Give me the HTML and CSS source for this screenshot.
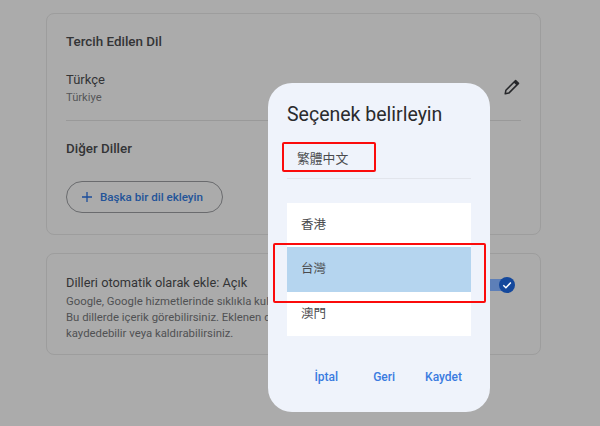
FILE: index.html
```html
<!DOCTYPE html>
<html>
    <head>
        <title>Dil Ayarları</title>
        <link rel="stylesheet" href="styles.css">
    </head>
    <body>
        <div class="card lang-card">
            <p class="card-title">Tercih Edilen Dil</p>
            <div class="lang-row">
                <div>
                    <p class="lang-name">Türkçe</p>
                    <p class="lang-region">Türkiye</p>
                </div>
                <svg class="edit-icon" width="18" height="18" viewBox="0 0 18 18">
                    <path d="M2.2 15.8 L2.9 12.2 L12.6 2.5 L15.5 5.4 L5.8 15.1 Z" fill="none" stroke="#26272a" stroke-width="1.5" stroke-linejoin="round"/>
                    <path d="M11.2 3.9 L14.1 6.8" stroke="#26272a" stroke-width="1.5"/>
                    <path d="M12.6 2.5 L15.5 5.4 L14.1 6.8 L11.2 3.9 Z" fill="#26272a"/>
                </svg>
            </div>
            <p class="card-title other-title">Diğer Diller</p>
            <button class="add-button">
                <svg width="10" height="10" viewBox="0 0 10 10">
                    <path d="M5 0 V10 M0 5 H10" stroke="#1c4e9c" stroke-width="1.3"/>
                </svg>
                Başka bir dil ekleyin
            </button>
        </div>

        <div class="card auto-card">
            <div class="auto-text">
                <p class="auto-title">Dilleri otomatik olarak ekle: Açık</p>
                <p class="auto-desc">Google, Google hizmetlerinde sıklıkla kul<br>Bu dillerde içerik görebilirsiniz. Eklenen d<br>kaydedebilir veya kaldırabilirsiniz.</p>
            </div>
            <div class="toggle">
                <div class="toggle-track"></div>
                <svg class="toggle-knob" width="16" height="16" viewBox="0 0 16 16">
                    <circle cx="8" cy="8" r="8" fill="#14489c"/>
                    <path d="M4.3 8.3 L6.9 10.8 L11.8 5.6" fill="none" stroke="#ffffff" stroke-width="1.5"/>
                </svg>
            </div>
        </div>

        <div class="dialog">
            <p class="dialog-title">Seçenek belirleyin</p>
            <p class="dialog-selected">繁體中文</p>
            <div class="dialog-line"></div>
            <div class="option-list">
                <div class="option">香港</div>
                <div class="option option-selected">台灣</div>
                <div class="option">澳門</div>
            </div>
            <div class="dialog-actions">
                <span class="action-cancel">İptal</span>
                <span>Geri</span>
                <span>Kaydet</span>
            </div>
        </div>

        <div class="red-box red-box-top"></div>
        <div class="red-box red-box-mid"></div>
    </body>
</html>
```

FILE: styles.css
```css
body{
    margin: 0;
    width: 600px;
    height: 426px;
    overflow: hidden;
    padding: 13px 0 0 46px;
    box-sizing: border-box;
    background-color: #ababab;
    font-family: Roboto, "Noto Sans CJK TC", sans-serif;
    color: #2a2b2d;
}
p{
    margin: 0;
}
.card{
    width: 495px;
    box-sizing: border-box;
    border: 1px solid #9d9d9d;
    border-radius: 8px;
    padding: 0 19px;
}
.lang-card{
    height: 222px;
    padding-top: 19px;
}
.card-title{
    font-size: 13.4px;
    line-height: 18px;
    font-weight: 500;
    color: #333436;
}
.lang-row{
    display: flex;
    justify-content: space-between;
    align-items: center;
    margin-top: 20px;
    padding-bottom: 13px;
    border-bottom: 1px solid #999999;
}
.lang-name{
    font-size: 13px;
    line-height: 18px;
    color: #333436;
}
.lang-region{
    font-size: 11.2px;
    line-height: 18px;
    color: #555658;
}
.edit-icon{
    margin-bottom: 4px;
}
.other-title{
    margin-top: 19px;
}
.add-button{
    display: flex;
    align-items: center;
    gap: 8px;
    margin-top: 23px;
    width: 157px;
    height: 32px;
    padding: 0 0 0 15px;
    background-color: transparent;
    border: 1px solid #6a6b6e;
    border-radius: 16px;
    font-family: Roboto, sans-serif;
    font-size: 11.6px;
    font-weight: 500;
    color: #235499;
}
.auto-card{
    height: 102px;
    margin-top: 18px;
    padding-top: 20px;
    display: flex;
    justify-content: space-between;
}
.auto-text{
    white-space: nowrap;
}
.auto-title{
    font-size: 12.8px;
    line-height: 18px;
    color: #333436;
}
.auto-desc{
    margin-top: 1px;
    font-size: 11.35px;
    line-height: 16px;
    color: #505153;
}
.toggle{
    display: flex;
    align-items: center;
    height: 16px;
    margin-top: 3px;
    margin-right: 6px;
}
.toggle-track{
    width: 20px;
    height: 12px;
    margin-right: -4px;
    background-color: #5d7fb8;
}
.toggle-knob{
    position: relative;
}
.dialog{
    position: absolute;
    left: 268px;
    top: 83px;
    width: 222px;
    height: 329px;
    box-sizing: border-box;
    padding: 0 19px;
    background-color: #eff3fb;
    border-radius: 24px;
}
.dialog-title{
    margin-top: 19px;
    font-size: 19.5px;
    line-height: 26px;
    color: #2a2b2d;
}
.dialog-selected{
    margin-top: 22px;
    padding-left: 10px;
    font-size: 12.8px;
    line-height: 18px;
    color: #4a4b4e;
}
.dialog-line{
    margin-top: 10px;
    height: 1px;
    background-color: #e2e5ec;
}
.option-list{
    margin-top: 24px;
    background-color: #ffffff;
}
.option{
    height: 44.4px;
    padding-left: 14px;
    font-size: 12.5px;
    line-height: 44px;
    color: #4a4b4e;
}
.option-selected{
    background-color: #b5d5ef;
}
.dialog-actions{
    display: flex;
    justify-content: flex-end;
    gap: 30px;
    margin-top: 33px;
    margin-right: 9px;
    font-size: 12px;
    font-weight: 500;
    line-height: 16px;
    color: #3a7be0;
}
.action-cancel{
    margin-right: 5px;
}
.red-box{
    position: absolute;
    box-sizing: border-box;
    border: 2.5px solid #fb0b0b;
    border-radius: 2px;
}
.red-box-top{
    left: 282px;
    top: 142px;
    width: 94px;
    height: 30px;
}
.red-box-mid{
    left: 273px;
    top: 243px;
    width: 213px;
    height: 60px;
}
```
